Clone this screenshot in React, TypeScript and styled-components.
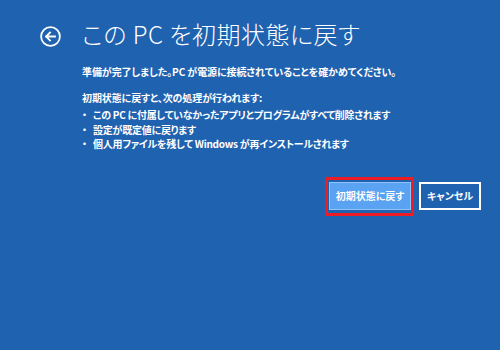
import React from "react";
import styled, { createGlobalStyle } from "styled-components";

const Global = createGlobalStyle`
  html, body { margin: 0; padding: 0; }
  body {
    width: 500px;
    height: 350px;
    overflow: hidden;
    background: #1f62b0;
    font-family: "Noto Sans CJK JP", "Noto Sans", sans-serif;
    color: #ffffff;
  }
`;

const Page = styled.div`
  box-sizing: border-box;
  width: 500px;
  height: 350px;
  background: #1f62b0;
  padding: 20px 19px 0 40px;
  display: flex;
  flex-direction: column;
`;

const Header = styled.div`
  display: flex;
  align-items: center;
  gap: 21px;
  height: 30px;
`;

const BackButton = styled.div`
  width: 21px;
  height: 21px;
  display: flex;
  align-items: center;
  justify-content: center;
  margin-top: 2px;
`;

const Title = styled.h1`
  margin: 0;
  margin-top: -3px;
  font-family: "Noto Sans CJK JP", sans-serif;
  font-weight: 300;
  font-size: 24px;
  line-height: 30px;
  font-feature-settings: "palt";
  letter-spacing: 0.5px;
  white-space: nowrap;
`;

const Content = styled.div`
  margin-left: 42px;
  margin-top: 15px;
  display: flex;
  flex-direction: column;
`;

const Text = styled.p<{ $gap?: number }>`
  margin: 0;
  margin-top: ${(p) => p.$gap ?? 0}px;
  font-size: 10px;
  line-height: 14px;
  font-weight: 700;
  font-feature-settings: "palt";
  letter-spacing: -0.1px;
  white-space: nowrap;
`;

const List = styled.ul`
  list-style: none;
  margin: 3px 0 0 0;
  padding: 0;
  display: flex;
  flex-direction: column;
`;

const Item = styled.li`
  display: flex;
  font-size: 10px;
  line-height: 14.5px;
  font-weight: 700;
  font-feature-settings: "palt";
  letter-spacing: -0.25px;
  white-space: nowrap;
`;

const Dot = styled.span`
  width: 11px;
  flex: none;
`;

const Buttons = styled.div`
  display: flex;
  justify-content: flex-end;
  align-items: flex-start;
  gap: 5px;
  margin-top: 30px;
`;

const Highlight = styled.div`
  border: 3px solid #ee1c24;
  padding: 2px 0 3px 1px;
  margin-top: -5px;
  display: flex;
`;

const Button = styled.button<{ $primary?: boolean }>`
  box-sizing: border-box;
  height: 28px;
  padding: 0;
  width: ${(p) => (p.$primary ? 82 : 62)}px;
  background: ${(p) => (p.$primary ? "#5aa3f3" : "transparent")};
  border: ${(p) => (p.$primary ? "1px solid #8fc4fb" : "2px solid #ffffff")};
  color: #ffffff;
  font-family: "Noto Sans CJK JP", sans-serif;
  font-size: 10px;
  font-weight: 700;
  font-feature-settings: "palt";
  display: flex;
  align-items: center;
  justify-content: center;
`;

export default function App() {
  return (
    <>
      <Global />
      <Page>
        <Header>
          <BackButton>
            <svg width="21" height="21" viewBox="0 0 21 21" fill="none" stroke="#fff" strokeWidth="1.8">
              <circle cx="10.5" cy="10.5" r="9.4" />
              <path d="M15 10.5H6.2M10 6.5L6 10.5L10 14.5" strokeLinecap="square" />
            </svg>
          </BackButton>
          <Title>この PC を初期状態に戻す</Title>
        </Header>
        <Content>
          <Text>準備が完了しました。PC が電源に接続されていることを確かめてください。</Text>
          <Text $gap={12}>初期状態に戻すと、次の処理が行われます:</Text>
          <List>
            <Item><Dot>・</Dot>この PC に付属していなかったアプリとプログラムがすべて削除されます</Item>
            <Item><Dot>・</Dot>設定が既定値に戻ります</Item>
            <Item><Dot>・</Dot>個人用ファイルを残して Windows が再インストールされます</Item>
          </List>
        </Content>
        <Buttons>
          <Highlight>
            <Button $primary>初期状態に戻す</Button>
          </Highlight>
          <Button>キャンセル</Button>
        </Buttons>
      </Page>
    </>
  );
}
